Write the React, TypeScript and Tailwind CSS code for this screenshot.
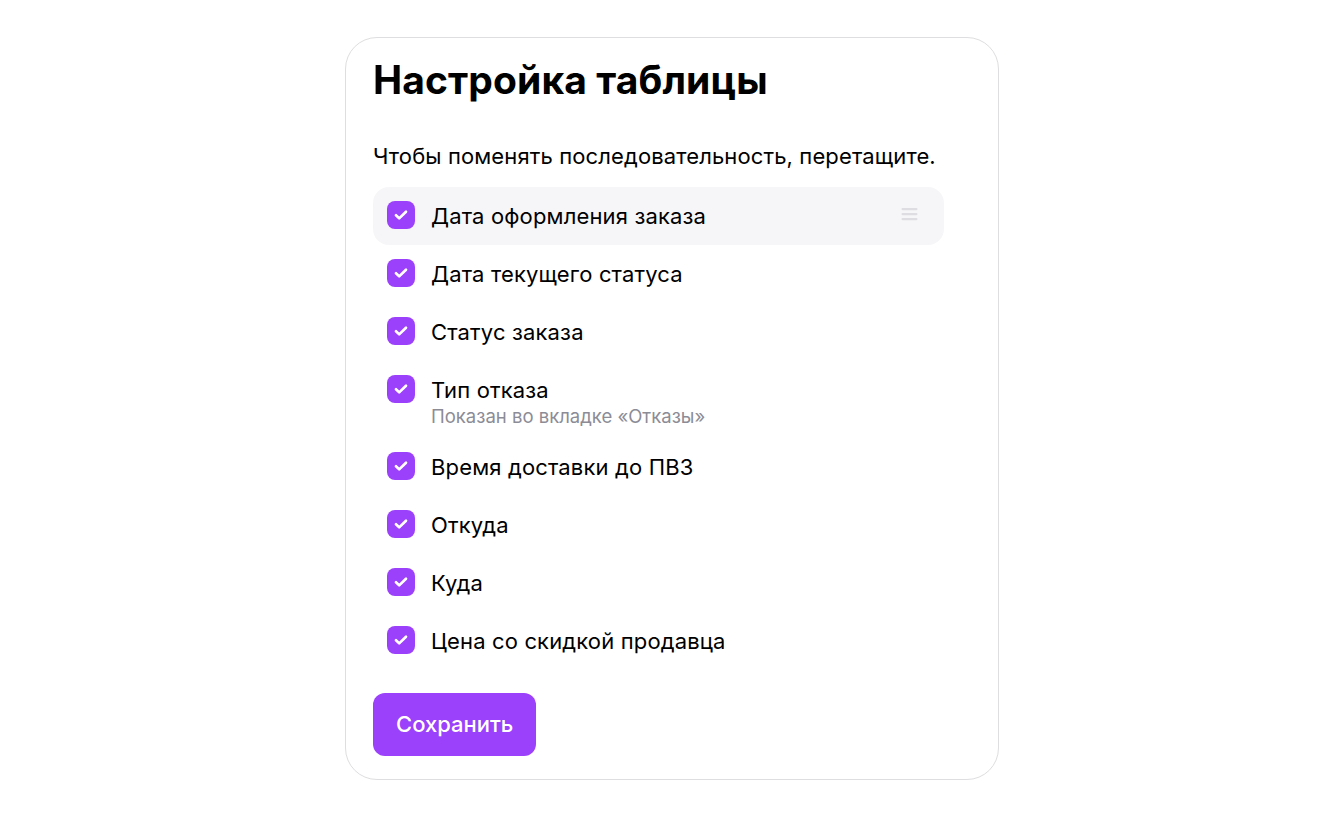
const items: { label: string; hint?: string }[] = [
  { label: "Дата оформления заказа" },
  { label: "Дата текущего статуса" },
  { label: "Статус заказа" },
  { label: "Тип отказа", hint: "Показан во вкладке «Отказы»" },
  { label: "Время доставки до ПВЗ" },
  { label: "Откуда" },
  { label: "Куда" },
  { label: "Цена со скидкой продавца" },
];

function Check() {
  return (
    <span className="flex h-7 w-7 shrink-0 items-center justify-center rounded-lg bg-[#9b40fb]">
      <svg width="18" height="18" viewBox="0 0 18 18" fill="none">
        <path d="M4 9.3l3.2 3.1L14 5.7" stroke="white" strokeWidth="2.7" strokeLinecap="round" strokeLinejoin="round" />
      </svg>
    </span>
  );
}

function DragHandle() {
  return (
    <svg width="17" height="14" viewBox="0 0 17 14" className="text-[#dedee2]">
      <rect x="0.5" y="1" width="16" height="2.2" rx="1.1" fill="currentColor" />
      <rect x="0.5" y="6" width="16" height="2.2" rx="1.1" fill="currentColor" />
      <rect x="0.5" y="11" width="16" height="2.2" rx="1.1" fill="currentColor" />
    </svg>
  );
}

export default function App() {
  return (
    <div className="min-h-screen bg-white pt-[37px] font-['Inter',sans-serif] text-black">
      <div className="ml-[345px] w-[654px] rounded-[32px] border border-[#dedee0] px-[27px] pt-[18px] pb-[23px]">
        <h1 className="text-[39px] font-bold leading-[48px] tracking-[0.1px]">Настройка таблицы</h1>
        <p className="mt-[37px] text-[22px] leading-[30px] tracking-[0.12px]">Чтобы поменять последовательность, перетащите.</p>

        {/* список колонок, прокручивается */}
        <div className="mt-[16px] h-[469px] w-[571px] overflow-hidden">
          {items.map((item, i) => (
            <div
              key={item.label}
              className={
                "flex items-start gap-4 rounded-2xl px-[14px] pt-[14px] " +
                (item.hint ? "pb-[12px] " : "pb-[14px] ") +
                (i === 0 ? "bg-[#f6f6f8]" : "")
              }
            >
              <Check />
              <div className="flex-1">
                <div className="text-[22px] leading-[30px] tracking-[0.15px]">{item.label}</div>
                {item.hint && <div className="mt-[1px] text-[18.5px] leading-[20px] text-[#8c8c96]">{item.hint}</div>}
              </div>
              {i === 0 && (
                <div className="mr-[12px] pt-[6px]">
                  <DragHandle />
                </div>
              )}
            </div>
          ))}
        </div>

        <button className="mt-[37px] h-[63px] rounded-xl bg-[#9b40fb] px-[23px] text-[22px] font-medium text-white">
          Сохранить
        </button>
      </div>
    </div>
  );
}
